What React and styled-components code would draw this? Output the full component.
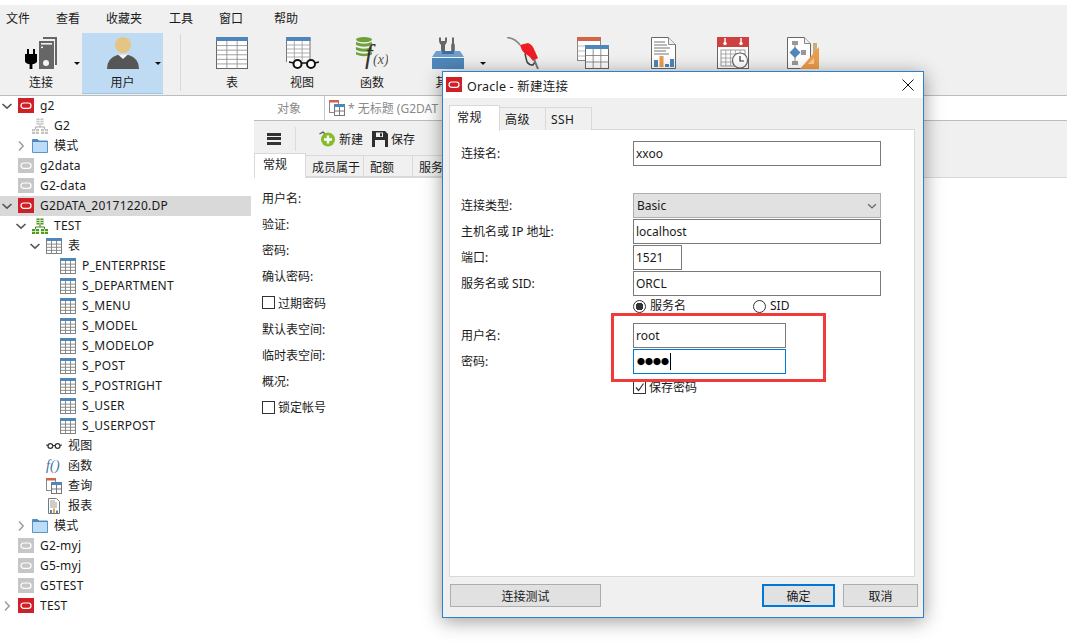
import React from "react";
import styled, { createGlobalStyle } from "styled-components";

const FONT = `"Noto Sans", "Noto Sans CJK SC", "Liberation Sans", sans-serif`;

const GlobalStyle = createGlobalStyle`
  html, body {
    margin: 0;
    padding: 0;
    background: #fff;
    font-family: ${FONT};
    font-size: 12px;
    color: #1a1a1a;
  }
  * { box-sizing: border-box; }
`;

const Page = styled.div`
  position: relative;
  width: 1067px;
  height: 643px;
  overflow: hidden;
  padding-top: 5px;
  background: #fff;
`;

const Top = styled.div`
  height: 91px;
  background: #f0f0f0;
  border-bottom: 1px solid #bcbcbc;
`;

const MenuBar = styled.div`
  display: flex;
  height: 28px;
  padding: 0 0 2px 6px;
  align-items: center;
  gap: 26px;
`;

const MenuItem = styled.span`
  margin-left: ${(p) => p.$ml || 0}px;
`;

const ToolBar = styled.div`
  display: flex;
  height: 61px;
`;

const ToolItem = styled.div`
  position: relative;
  display: flex;
  flex-direction: column;
  align-items: center;
  width: ${(p) => p.$w || 70}px;
  padding-top: 4px;
  background: ${(p) => (p.$active ? "#bfdbf3" : "transparent")};
  box-shadow: ${(p) => (p.$active ? "inset 0 -1px 0 #9cc6ea" : "none")};
  svg { display: block; }
`;

const ToolLabel = styled.span`
  margin-top: 5px;
  line-height: 17px;
`;

const Arrow = styled.i`
  position: absolute;
  right: 2px;
  top: 29px;
  border-left: 3px solid transparent;
  border-right: 3px solid transparent;
  border-top: 3px solid #111;
`;

const ToolSep = styled.div`
  width: 1px;
  height: 57px;
  margin: 1px 16px 0 17px;
  background: #d8d8d8;
`;

const Main = styled.div`
  display: flex;
  height: 547px;
`;

const Sidebar = styled.div`
  width: 251px;
  background: #fff;
`;

const TreeRow = styled.div`
  display: flex;
  align-items: center;
  height: 20px;
  padding-bottom: 1px;
  padding-left: ${(p) => p.$level * 14}px;
  letter-spacing: 0.22px;
  background: ${(p) => (p.$selected ? "#d9d9d9" : "transparent")};
`;

const TreeLabel = styled.span`
  margin-bottom: ${(p) => (p.$cjk ? "2px" : 0)};
`;

const Caret = styled.span`
  display: flex;
  flex: none;
  width: 18px;
  svg { display: block; }
`;

const TreeIconBox = styled.span`
  display: flex;
  flex: none;
  width: 16px;
  height: 16px;
  margin-right: 6px;
  svg { display: block; }
`;

const FnMark = styled.span`
  font: italic 14px "Liberation Serif", serif;
  color: #3c6ea5;
  line-height: 16px;
  white-space: nowrap;
`;

const Content = styled.div`
  flex: 1;
  padding-left: 3px;
`;

const DocTabs = styled.div`
  display: flex;
  height: 25px;
  background: #fff;
  border-bottom: 1px solid #bcbcbc;
`;

const DocTab = styled.div`
  display: flex;
  align-items: center;
  justify-content: ${(p) => (p.$file ? "flex-start" : "center")};
  gap: 3px;
  width: ${(p) => (p.$file ? "118px" : "71px")};
  padding-left: ${(p) => (p.$file ? "4px" : 0)};
  white-space: nowrap;
  color: #8a8a8a;
  border-right: ${(p) => (p.$file ? "0" : "1px solid #c8c8c8")};
  svg { flex: none; }
`;

const ObjBar = styled.div`
  display: flex;
  align-items: center;
  height: 32px;
  padding-top: 3px;
  background: #f0f0f0;
`;

const Burger = styled.div`
  width: 14px;
  height: 12px;
  margin-left: 13px;
  border-top: 3px solid #333;
  border-bottom: 3px solid #333;
  position: relative;
  &::after {
    content: "";
    position: absolute;
    left: 0;
    right: 0;
    top: 1.5px;
    height: 3px;
    background: #333;
  }
`;

const ObjSep = styled.div`
  width: 1px;
  height: 24px;
  margin: 0 23px 0 14px;
  background: #dcdcdc;
`;

const ObjBtn = styled.span`
  display: flex;
  align-items: center;
  gap: 3px;
  margin-right: 9px;
  svg { display: block; }
`;

const SubTabs = styled.div`
  display: flex;
  height: 25px;
  background: #f0f0f0;
  border-bottom: 1px solid #d9d9d9;
`;

const SubTab = styled.div`
  display: flex;
  align-items: center;
  flex: none;
  width: ${(p) => p.$w}px;
  white-space: nowrap;
  margin-top: ${(p) => (p.$active ? 0 : "2px")};
  height: ${(p) => (p.$active ? "25px" : "22px")};
  padding: ${(p) => (p.$active ? "0 0 4px 8px" : "2px 0 0 6px")};
  background: ${(p) => (p.$active ? "#fff" : "#f0f0f0")};
  border: 1px solid #d9d9d9;
  border-left-width: ${(p) => (p.$active ? "1px" : 0)};
  border-bottom-width: ${(p) => (p.$active ? 0 : "1px")};
`;

const ObjForm = styled.div`
  padding: 7px 0 0 8px;
`;

const ObjField = styled.div`
  display: flex;
  align-items: center;
  gap: 3px;
  height: ${(p) => p.$h || 26}px;
`;

const Box = styled.span`
  display: block;
  width: 13px;
  height: 13px;
  border: 1px solid #333;
  background: #fff;
  flex: none;
  svg { display: block; }
`;

const Dialog = styled.div`
  position: absolute;
  left: 442px;
  top: 71px;
  width: 482px;
  height: 547px;
  display: flex;
  flex-direction: column;
  background: #f0f0f0;
  border: 1px solid #2b80d0;
  box-shadow: 0 3px 18px rgba(0, 0, 0, 0.4);
`;

const TitleBar = styled.div`
  display: flex;
  align-items: center;
  height: 26px;
  flex: none;
  padding: 0 9px 0 3px;
  background: #fff;
  svg { display: block; }
`;

const TitleText = styled.span`
  flex: 1;
  margin-left: 5px;
  font-size: 12.5px;
  letter-spacing: 0.2px;
`;

const DlgTabs = styled.div`
  display: flex;
  height: 32px;
  padding: 7px 0 0 6px;
  flex: none;
`;

const DlgTab = styled.div`
  display: flex;
  align-items: center;
  width: ${(p) => p.$w}px;
  height: ${(p) => (p.$active ? "26px" : "23px")};
  margin-top: ${(p) => (p.$active ? 0 : "2px")};
  padding: ${(p) => (p.$active ? "0 0 4px 7px" : "0 0 0 5px")};
  letter-spacing: 0.4px;
  background: ${(p) => (p.$active ? "#fff" : "#f0f0f0")};
  border: 1px solid #d9d9d9;
  border-bottom: 0;
  border-left-width: ${(p) => (p.$active ? "1px" : 0)};
  position: relative;
  z-index: ${(p) => (p.$active ? 1 : 0)};
`;

const Panel = styled.div`
  height: 448px;
  flex: none;
  margin: -1px 8px 0 6px;
  background: #fff;
  border: 1px solid #d9d9d9;
`;

const FormGrid = styled.div`
  display: grid;
  grid-template-columns: 172px 1fr;
  grid-auto-rows: 26px;
  padding: 11px 0 0 11px;
`;

const FormLabel = styled.div`
  line-height: 25px;
`;

const Input = styled.div`
  display: flex;
  align-items: center;
  width: ${(p) => p.$w}px;
  height: 25px;
  padding: 0 2px 1px;
  background: #fff;
  border: 1px solid ${(p) => (p.$focus ? "#0078d7" : "#7a7a7a")};
`;

const Cursor = styled.i`
  width: 1px;
  height: 17px;
  margin-left: 1px;
  background: #000;
`;

const Dots = styled.span`
  font-size: 8px;
  margin-left: 1px;
  color: #000;
`;

const Select = styled.div`
  display: flex;
  align-items: center;
  justify-content: space-between;
  width: 248px;
  height: 25px;
  padding: 0 2px 0 3px;
  background: #e1e1e1;
  border: 1px solid #adadad;
`;

const Radios = styled.div`
  display: flex;
  height: 18px;
  align-items: center;
`;

const RadioLabel = styled.label`
  display: flex;
  align-items: center;
  gap: 4px;
  width: 120px;
  line-height: 16px;
`;

const RadioDot = styled.span`
  display: block;
  width: 13px;
  height: 13px;
  border-radius: 50%;
  border: 1px solid #333;
  background: ${(p) => (p.$on ? "radial-gradient(circle, #333 0 3.6px, #fff 4px)" : "#fff")};
`;

const SaveRow = styled.div`
  display: flex;
  align-items: center;
  gap: 3px;
  height: 24px;
`;

const RedBox = styled.div`
  position: absolute;
  left: 168px;
  top: 241px;
  width: 215px;
  height: 69px;
  border: 3px solid #f33a3a;
`;

const DlgFooter = styled.div`
  display: flex;
  align-items: center;
  padding: 7px 5px 0 7px;
`;

const Btn = styled.div`
  display: flex;
  align-items: center;
  justify-content: center;
  width: ${(p) => p.$w}px;
  height: 23px;
  margin-left: ${(p) => p.$ml || 0}px;
  background: #e1e1e1;
  border: ${(p) => (p.$primary ? "2px solid #0078d7" : "1px solid #adadad")};
`;

/* small icons */

const OracleIcon = ({ on, size = 16 }) => (
  <svg width={size} height={size} viewBox="0 0 16 16">
    <rect width="16" height="15" fill={on ? "#cf2027" : "#c6c6c6"} />
    <rect x="3" y="5" width="10" height="5.4" rx="2.7" fill="none" stroke="#fff" strokeWidth="1.2" />
  </svg>
);

const SchemaIcon = ({ c = "#c4c4c4", d = "#a8a8a8" }) => (
  <svg width="16" height="16" viewBox="0 0 16 16">
    <rect x="4.5" y="0.5" width="7" height="6" fill={c} />
    <path d="M4.5 2.5h7M4.5 4.5h7M8 0.5v6" stroke="#fff" strokeWidth="0.7" />
    <path d="M8 6.5v2.5M3.5 11V9h9v2" fill="none" stroke={d} />
    <rect x="0" y="11" width="7" height="5" fill={c} />
    <rect x="9" y="11" width="7" height="5" fill={c} />
    <path d="M0 13.5h7M9 13.5h7M3.5 11v5M12.5 11v5" stroke="#fff" strokeWidth="0.7" />
  </svg>
);

const FolderIcon = () => (
  <svg width="16" height="16" viewBox="0 0 16 16">
    <path d="M0.5 1.5h5l1.5 1.5h8.5v11.5h-15z" fill="#bcdcf7" stroke="#5d94c6" />
    <path d="M0.5 1.5h5l1.5 1.5h8.5v1h-15z" fill="#4f87bb" />
  </svg>
);

const gridLines = (x, y, w, h, cols, rows, color, sw = 0.8) => {
  const parts = [];
  for (let i = 1; i < cols; i++) parts.push(`M${x + (w * i) / cols} ${y}v${h}`);
  for (let i = 1; i < rows; i++) parts.push(`M${x} ${y + (h * i) / rows}h${w}`);
  return <path d={parts.join("")} stroke={color} strokeWidth={sw} fill="none" />;
};

const TableIcon = () => (
  <svg width="16" height="16" viewBox="0 0 16 16">
    <rect x="0.5" y="0.5" width="15" height="15" fill="#fff" stroke="#808080" />
    {gridLines(0.5, 3, 15, 12.5, 3, 4, "#808080", 0.9)}
    <rect x="0" y="0" width="16" height="3" fill="#4f87bb" />
  </svg>
);

const GlassesIcon = () => (
  <svg width="16" height="16" viewBox="0 0 16 16">
    <circle cx="4.4" cy="8" r="2.4" fill="none" stroke="#333" strokeWidth="1.3" />
    <circle cx="11.6" cy="8" r="2.4" fill="none" stroke="#333" strokeWidth="1.3" />
    <path d="M6.8 7.5h2.4M0 7l2 0.5M16 7l-2 0.5" stroke="#333" />
  </svg>
);

const QueryIcon = () => (
  <svg width="16" height="16" viewBox="0 0 16 16">
    <rect x="0.5" y="0.5" width="9" height="12" fill="#fff" stroke="#888" />
    <rect x="0" y="0" width="10" height="2.5" fill="#d0654a" />
    <rect x="5.5" y="5.5" width="10" height="10" fill="#fff" stroke="#777" />
    <rect x="5" y="4" width="11" height="3" fill="#4f87bb" />
    <path d="M10.5 7v8.5M5.5 11h10" stroke="#777" />
  </svg>
);

const ReportIcon = () => (
  <svg width="16" height="16" viewBox="0 0 16 16">
    <path d="M2.5 0.5h8l3 3v12h-11z" fill="#fff" stroke="#777" />
    <path d="M4 3h5M4 5h7M4 7h7M4 9h7" stroke="#999" />
    <rect x="4" y="12" width="2" height="3" fill="#4f87bb" />
    <rect x="7" y="10.5" width="2" height="4.5" fill="#ee9c49" />
    <rect x="10" y="12.5" width="2" height="2.5" fill="#4f87bb" />
  </svg>
);

const NewIcon = () => (
  <svg width="17" height="16" viewBox="0 0 17 16">
    <path d="M0.5 3L4 1l2 2" fill="none" stroke="#555" strokeWidth="1.4" />
    <circle cx="9" cy="8.5" r="7" fill="#86bd2d" />
    <path d="M9 4.5v8M5 8.5h8" stroke="#fff" strokeWidth="2.4" />
  </svg>
);

const SaveIcon = () => (
  <svg width="16" height="16" viewBox="0 0 16 16">
    <path d="M0 0h13l3 3v13H0z" fill="#2e2e2e" />
    <rect x="4" y="1.5" width="7" height="4.5" fill="#f0f0f0" />
    <rect x="8" y="2.3" width="2" height="3" fill="#2e2e2e" />
    <rect x="3" y="9" width="10" height="7" fill="#f0f0f0" />
  </svg>
);

const Chevron = ({ open, color, size = 14 }) => (
  <svg width={size} height={size} viewBox="0 0 14 14">
    <path
      d={open ? "M2.5 5L7 9.2 11.5 5" : "M5 2.5L9.2 7 5 11.5"}
      fill="none"
      stroke={color || (open ? "#555" : "#a0a0a0")}
      strokeWidth="1.6"
    />
  </svg>
);

const CheckMark = () => (
  <svg width="11" height="11" viewBox="0 0 11 11">
    <path d="M2 5.5l2.6 3L9.5 1.5" fill="none" stroke="#333" strokeWidth="1.2" />
  </svg>
);

/* toolbar icons, all 32x32 */

const ConnectionIcon = () => (
  <svg width="32" height="32" viewBox="0 0 32 32">
    <path d="M18 0h14v28h-2V2H18z" fill="#666" />
    <rect x="14" y="4" width="15" height="28" fill="#666" />
    <rect x="16" y="6" width="11" height="1.6" fill="#f0f0f0" />
    <rect x="16" y="9.5" width="2" height="1.6" fill="#f0f0f0" />
    <circle cx="21" cy="26" r="3" fill="#f4f4f4" />
    <path d="M2 12h2v5h4v-5h2v5h2v7q0 2.6-4.6 3.2V32H4.6v-4.8Q0 26.6 0 24v-7h2z" fill="#000" />
  </svg>
);

const UserIcon = () => (
  <svg width="32" height="32" viewBox="0 0 32 32">
    <circle cx="16" cy="8" r="8" fill="#e4c583" />
    <path d="M0 32q0-11 10.5-14h11Q32 21 32 32z" fill="#565656" />
    <path d="M11 17.5h10L16 22z" fill="#f4f4f4" />
  </svg>
);

const BigTableIcon = () => (
  <svg width="32" height="32" viewBox="0 0 32 32">
    <rect x="0.5" y="0.5" width="31" height="31" fill="#fff" stroke="#666" />
    {gridLines(0.5, 4, 31, 27.5, 3, 6, "#888")}
    <rect width="32" height="4" fill="#4f87bb" />
  </svg>
);

const ViewIcon = () => (
  <svg width="33" height="32" viewBox="0 0 33 32">
    <path d="M0.5 25V0.5h23.5V22" fill="#fff" stroke="#777" />
    {gridLines(0.5, 4, 23.5, 20, 3, 5, "#999")}
    <rect width="24.5" height="4" fill="#4f87bb" />
    <circle cx="11.5" cy="27" r="4" fill="#fff" stroke="#111" strokeWidth="2" />
    <circle cx="25" cy="27" r="4" fill="#fff" stroke="#111" strokeWidth="2" />
    <path d="M15.5 26h5.5M3 25l5 1M29 26l4-1" stroke="#111" strokeWidth="1.6" />
  </svg>
);

const FunctionIcon = () => (
  <svg width="32" height="32" viewBox="0 0 32 32">
    <ellipse cx="8" cy="2.6" rx="8" ry="2.6" fill="#6fa13a" />
    <path d="M0 5q8 3.5 16 0v3q-8 3.5-16 0zM0 10q8 3.5 16 0v3q-8 3.5-16 0zM0 15q8 3.5 16 0v2.5q-8 3.5-16 0z" fill="#6fa13a" />
    <text x="9" y="26" fontFamily="Liberation Serif, serif" fontStyle="italic" fontSize="27" fill="#333">f</text>
    <text x="17" y="27" fontFamily="Liberation Serif, serif" fontStyle="italic" fontSize="14" fill="#555">(x)</text>
  </svg>
);

const OtherIcon = () => (
  <svg width="32" height="32" viewBox="0 0 32 32">
    <path d="M9 17V8Q7 6.500 7 3.500V0.500h2V4h4V0.500h2v3Q15 6.500 13 8v9z" fill="#666" />
    <path d="M20 0.500h2V6l0.800 2V17h-3.600V8L20 6z" fill="#666" />
    <path d="M4 14h24l4 6H0z" fill="#6f9fce" />
    <path d="M10 14h12v3H10z" fill="#3f6f9e" />
    <rect y="20" width="32" height="12" fill="#4f87bb" />
    <rect y="20" width="32" height="1" fill="#f4f4f4" />
  </svg>
);

const PumpIcon = () => (
  <svg width="32" height="32" viewBox="0 0 32 32">
    <path d="M0 0.500Q8 1 13 8" fill="none" stroke="#888" strokeWidth="1.6" />
    <path d="M13 8L21 6Q24 7 26 10L31 21L26 24Q22 18 18 17Q14 13 13 8z" fill="#ee1c25" />
    <path d="M18 17L20 25Q22 28 26 28L28 25" fill="none" stroke="#444" strokeWidth="1.5" />
    <path d="M27 22L31 32" stroke="#777" strokeWidth="2" />
  </svg>
);

const BigQueryIcon = () => (
  <svg width="32" height="32" viewBox="0 0 32 32">
    <rect x="0.5" y="0.5" width="23" height="23" fill="#fff" stroke="#888" />
    <rect width="24" height="4" fill="#d0654a" />
    {gridLines(0.5, 4, 8, 20, 1, 4, "#aaa")}
    <rect x="8.5" y="8.5" width="23" height="23" fill="#fff" stroke="#666" />
    {gridLines(8.5, 12, 23, 19.5, 3, 3, "#777")}
    <rect x="8" y="8" width="24" height="4" fill="#4f87bb" />
  </svg>
);

const BigReportIcon = () => (
  <svg width="32" height="32" viewBox="0 0 32 32">
    <path d="M4.5 0.5h17l7 7v24h-24z" fill="#fff" stroke="#666" />
    <path d="M21.5 0.5v7h7" fill="#eee" stroke="#888" />
    <path d="M7 5h11M7 8h13M7 11h16M7 14h12M7 17h15" stroke="#777" />
    <rect x="7" y="23" width="4" height="7" fill="#4f87bb" />
    <rect x="12.5" y="19" width="4" height="11" fill="#ee9c49" />
    <rect x="18" y="27" width="4" height="3" fill="#4f87bb" />
    <rect x="23" y="22" width="4" height="8" fill="#4f87bb" />
  </svg>
);

const CalendarIcon = () => (
  <svg width="32" height="32" viewBox="0 0 32 32">
    <rect x="0.5" y="1" width="31" height="30.5" fill="#fff" stroke="#666" />
    <rect y="0" width="32" height="10" fill="#cf4040" />
    <circle cx="8" cy="6.5" r="1.7" fill="#fff" />
    <circle cx="24" cy="6.5" r="1.7" fill="#fff" />
    <path d="M8 1v5M24 1v5" stroke="#fff" strokeWidth="1.4" />
    {gridLines(4, 13, 24, 16, 5, 4, "#999")}
    <rect x="4" y="13" width="24" height="16" fill="none" stroke="#999" />
    <circle cx="23" cy="23.5" r="7.5" fill="#fff" stroke="#666" strokeWidth="1.2" />
    <path d="M23 19v5h4" fill="none" stroke="#333" strokeWidth="1.2" />
  </svg>
);

const ModelIcon = () => (
  <svg width="32" height="32" viewBox="0 0 32 32">
    <path d="M0.5 0.5h17l6 6v25H0.5z" fill="#fff" stroke="#666" />
    <path d="M17.5 0.5v6h6" fill="#eee" stroke="#888" />
    <rect x="5" y="4" width="6" height="4" fill="#999" />
    <rect x="5" y="24" width="6" height="4" fill="#999" />
    <rect x="14" y="13" width="5" height="5" fill="#999" />
    <path d="M8 8v16" stroke="#888" />
    <path d="M8 10l5.5 5.5L8 21l-5.5-5.5z" fill="#4f87bb" />
    <rect x="26" y="6" width="4" height="15" fill="#c9ad82" />
    <path d="M32 10v22H13z" fill="#ee9c49" />
    <path d="M27 21v6h-6z" fill="#f7cf9f" />
  </svg>
);

/* data */

const menus = [
  { label: "文件" },
  { label: "查看" },
  { label: "收藏夹" },
  { label: "工具", ml: 1 },
  { label: "窗口" },
  { label: "帮助", ml: 5 },
];

const tools = [
  { label: "表", icon: <BigTableIcon /> },
  { label: "视图", icon: <ViewIcon /> },
  { label: "函数", icon: <FunctionIcon /> },
  { label: "其它", icon: <OtherIcon />, w: 81, arrow: true },
  { label: "", icon: <PumpIcon /> },
  { label: "", icon: <BigQueryIcon /> },
  { label: "", icon: <BigReportIcon /> },
  { label: "", icon: <CalendarIcon /> },
  { label: "", icon: <ModelIcon /> },
];

const treeIcons = {
  on: <OracleIcon on />,
  off: <OracleIcon />,
  schemaOff: <SchemaIcon />,
  schemaOn: <SchemaIcon c="#4c9a1f" d="#3d8417" />,
  folder: <FolderIcon />,
  table: <TableIcon />,
  view: <GlassesIcon />,
  fn: <FnMark>f()</FnMark>,
  query: <QueryIcon />,
  report: <ReportIcon />,
};

const tree = [
  { level: 0, icon: "on", label: "g2", open: true },
  { level: 1, icon: "schemaOff", label: "G2" },
  { level: 1, icon: "folder", label: "模式", open: false },
  { level: 0, icon: "off", label: "g2data" },
  { level: 0, icon: "off", label: "G2-data" },
  { level: 0, icon: "on", label: "G2DATA_20171220.DP", open: true, selected: true },
  { level: 1, icon: "schemaOn", label: "TEST", open: true },
  { level: 2, icon: "table", label: "表", open: true },
  ...[
    "P_ENTERPRISE",
    "S_DEPARTMENT",
    "S_MENU",
    "S_MODEL",
    "S_MODELOP",
    "S_POST",
    "S_POSTRIGHT",
    "S_USER",
    "S_USERPOST",
  ].map((label) => ({ level: 3, icon: "table", label })),
  { level: 2, icon: "view", label: "视图" },
  { level: 2, icon: "fn", label: "函数" },
  { level: 2, icon: "query", label: "查询" },
  { level: 2, icon: "report", label: "报表" },
  { level: 1, icon: "folder", label: "模式", open: false },
  { level: 0, icon: "off", label: "G2-myj" },
  { level: 0, icon: "off", label: "G5-myj" },
  { level: 0, icon: "off", label: "G5TEST" },
  { level: 0, icon: "on", label: "TEST", open: false },
];

const objFields = [
  { label: "用户名:" },
  { label: "验证:" },
  { label: "密码:" },
  { label: "确认密码:" },
  { label: "过期密码", check: true, h: 27 },
  { label: "默认表空间:" },
  { label: "临时表空间:" },
  { label: "概况:" },
  { label: "锁定帐号", check: true },
];

const App = () => (
  <>
    <GlobalStyle />
    <Page>
      <Top>
        <MenuBar>
          {menus.map((m) => (
            <MenuItem key={m.label} $ml={m.ml}>
              {m.label}
            </MenuItem>
          ))}
        </MenuBar>
        <ToolBar>
          <ToolItem $w={82}>
            <ConnectionIcon />
            <ToolLabel>连接</ToolLabel>
            <Arrow />
          </ToolItem>
          <ToolItem $w={81} $active>
            <UserIcon />
            <ToolLabel>用户</ToolLabel>
            <Arrow />
          </ToolItem>
          <ToolSep />
          {tools.map((t, i) => (
            <ToolItem key={i} $w={t.w}>
              {t.icon}
              <ToolLabel>{t.label}</ToolLabel>
              {t.arrow && <Arrow />}
            </ToolItem>
          ))}
        </ToolBar>
      </Top>
      <Main>
        <Sidebar>
          {tree.map((n, i) => (
            <TreeRow key={i} $level={n.level} $selected={n.selected}>
              <Caret>{n.open !== undefined && <Chevron open={n.open} />}</Caret>
              <TreeIconBox>{treeIcons[n.icon]}</TreeIconBox>
              <TreeLabel $cjk={/[^\x00-\x7f]/.test(n.label)}>{n.label}</TreeLabel>
            </TreeRow>
          ))}
        </Sidebar>
        <Content>
          <DocTabs>
            <DocTab>对象</DocTab>
            <DocTab $file>
              <QueryIcon />* 无标题 (G2DAT
            </DocTab>
          </DocTabs>
          <ObjBar>
            <Burger />
            <ObjSep />
            <ObjBtn>
              <NewIcon />
              新建
            </ObjBtn>
            <ObjBtn>
              <SaveIcon />
              保存
            </ObjBtn>
          </ObjBar>
          <SubTabs>
            <SubTab $w={52} $active>
              常规
            </SubTab>
            <SubTab $w={58}>成员属于</SubTab>
            <SubTab $w={49}>配额</SubTab>
            <SubTab $w={30}>服务</SubTab>
          </SubTabs>
          <ObjForm>
            {objFields.map((f) => (
              <ObjField key={f.label} $h={f.h}>
                {f.check && <Box />}
                {f.label}
              </ObjField>
            ))}
          </ObjForm>
        </Content>
      </Main>

      <Dialog>
        <TitleBar>
          <OracleIcon on />
          <TitleText>Oracle - 新建连接</TitleText>
          <svg width="12" height="12" viewBox="0 0 12 12">
            <path d="M0.5 0.5l11 11M11.5 0.5l-11 11" stroke="#111" strokeWidth="1" />
          </svg>
        </TitleBar>
        <DlgTabs>
          <DlgTab $w={51} $active>
            常规
          </DlgTab>
          <DlgTab $w={46}>高级</DlgTab>
          <DlgTab $w={46}>SSH</DlgTab>
        </DlgTabs>
        <Panel>
          <FormGrid>
            <FormLabel>连接名:</FormLabel>
            <Input $w={248}>xxoo</Input>
            <div />
            <div />
            <FormLabel>连接类型:</FormLabel>
            <Select>
              Basic
              <Chevron open color="#666" size={12} />
            </Select>
            <FormLabel>主机名或 IP 地址:</FormLabel>
            <Input $w={248}>localhost</Input>
            <FormLabel>端口:</FormLabel>
            <Input $w={49}>1521</Input>
            <FormLabel>服务名或 SID:</FormLabel>
            <Input $w={248}>ORCL</Input>
            <div />
            <Radios>
              <RadioLabel>
                <RadioDot $on />
                服务名
              </RadioLabel>
              <RadioLabel>
                <RadioDot />
                SID
              </RadioLabel>
            </Radios>
            <FormLabel>用户名:</FormLabel>
            <Input $w={153}>root</Input>
            <FormLabel>密码:</FormLabel>
            <Input $w={153} $focus>
              <Dots>●●●●</Dots>
              <Cursor />
            </Input>
            <div />
            <SaveRow>
              <Box>
                <CheckMark />
              </Box>
              保存密码
            </SaveRow>
          </FormGrid>
        </Panel>
        <DlgFooter>
          <Btn $w={151}>连接测试</Btn>
          <Btn $w={73} $ml={161} $primary>
            确定
          </Btn>
          <Btn $w={75} $ml={8}>
            取消
          </Btn>
        </DlgFooter>
        <RedBox />
      </Dialog>
    </Page>
  </>
);

export default App;
